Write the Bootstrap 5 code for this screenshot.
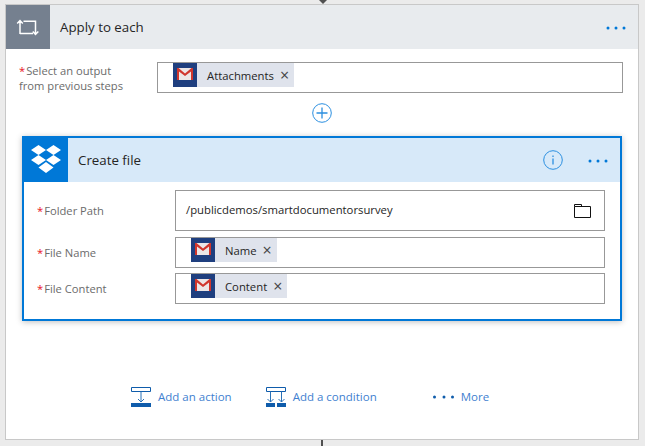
<!DOCTYPE html>
<html lang="en">
<head>
  <meta charset="UTF-8">
  <title>Apply to each</title>
  <link href="https://cdn.jsdelivr.net/npm/bootstrap@5.3.3/dist/css/bootstrap.min.css" rel="stylesheet">
  <script src="https://cdn.jsdelivr.net/npm/bootstrap@5.3.3/dist/js/bootstrap.bundle.min.js"></script>
  <style>
    html, body { height: 446px; overflow: hidden; }
    body { background: #ebebeb; font-family: "Open Sans", "Noto Sans", sans-serif; font-size: 12px; color: #252525; }
    .tick-top { height: 4px; }
    .tick-top svg { display: block; }
    .flow-panel { margin-left: 5px; width: 634px; height: 436px; background: #fff; border: 1px solid #c8c8c8; }
    .tick-bottom { width: 2px; height: 6px; background: #505050; margin-left: 321px; }
    .step-head { height: 44px; }
    .step-head.grey { background: #e8ebee; }
    .step-head.blue { background: #d7e9f9; }
    .step-icon { width: 44px; height: 44px; }
    .step-icon.grey { background: #75808f; }
    .step-icon.blue { background: #0078d7; }
    .step-title { font-size: 13.3px; padding-left: 10px; padding-top: 1px; }
    .dots { width: 20px; height: 4px; margin-right: 12px; margin-top: 2px; }
    .info-mark { margin-right: 25px; }
    .field-label { color: #6b6b6b; font-size: 11.2px; line-height: 15px; }
    .req { color: #e81123; margin-right: 1px; }
    .field-box { border: 1px solid #989898; background: #fff; }
    .token { height: 24px; background: #dfe3ec; font-size: 11.3px; }
    .token-mail { width: 24px; height: 24px; background: #1f3f7f; }
    .token-text { margin-left: 10px; padding-top: 2px; }
    .token-x { color: #444; font-size: 16px; line-height: 1; margin: 0 5px 0 6px; }
    .loop-field { margin: 13px 15px 0 13px; }
    .loop-field .field-label { width: 138px; padding-top: 1px; }
    .loop-field .field-box { height: 31px; padding-left: 15px; flex: 1; }
    .plus-row { height: 43px; padding-bottom: 3px; }
    .inner-step { margin: 0 16px; height: 185px; border: 2px solid #0078d7; box-shadow: 0 1px 6px rgba(0,0,0,.25); }
    .inner-rows { padding: 8px 15px 0 13px; }
    .inner-rows .field-label { width: 138px; margin-bottom: 6px; }
    .inner-rows .field-box { flex: 1; height: 31px; padding-left: 15px; margin-bottom: 5px; }
    .inner-rows .field-box.tall { height: 41px; padding-left: 10px; padding-right: 13px; margin-bottom: 6px; font-size: 11.3px; }
    .add-bar { padding-top: 66px; padding-left: 125px; }
    .add-item { color: #3f7fd0; font-size: 11.5px; text-decoration: none; }
    .add-item svg { margin-right: 7px; }
    .add-cond { margin-left: 34px; }
    .add-more { margin-left: 56px; }
  </style>
</head>
<body>
  <div class="tick-top d-flex justify-content-center">
    <svg width="10" height="4" viewBox="0 0 10 4"><path d="M1 0h8L5 4z" fill="#505050"/></svg>
  </div>
  <div class="flow-panel">
    <div class="step-head grey d-flex align-items-center">
      <div class="step-icon grey">
        <svg width="44" height="44" viewBox="0 0 44 44" fill="none" stroke="#fff" stroke-width="1.5">
          <path d="M14 29V16M11.200 18.500L14 15.500l2.800 3M14 28.500h13M17.500 16.250h12V29M26.800 26.500l2.700 3 2.800-3"/>
        </svg>
      </div>
      <div class="step-title flex-grow-1">Apply to each</div>
      <svg class="dots" viewBox="0 0 20 4" fill="#0078d7"><circle cx="2" cy="2" r="1.500"/><circle cx="10" cy="2" r="1.500"/><circle cx="18" cy="2" r="1.500"/></svg>
    </div>

    <div class="loop-field d-flex">
      <div class="field-label"><span class="req">*</span>Select an output<br>from previous steps</div>
      <div class="field-box d-flex">
        <div class="token d-flex align-items-center">
          <div class="token-mail">
            <svg width="24" height="24" viewBox="0 0 24 24"><path d="M4 5h16v12H4z" fill="#ece6e6"/><path d="M4 17V5h1.500L12 10.500 18.500 5H20v12h-2V8.500L12 13 6 8.500V17z" fill="#d0352c"/></svg>
          </div>
          <span class="token-text">Attachments</span>
          <span class="token-x">×</span>
        </div>
      </div>
    </div>

    <div class="plus-row d-flex align-items-center justify-content-center">
      <svg width="20" height="20" viewBox="0 0 20 20" fill="none" stroke="#2b8fe0"><circle cx="10" cy="10" r="9.300" stroke-width="1"/><path d="M10 4.500v11M4.500 10h11" stroke-width="1.300"/></svg>
    </div>

    <div class="inner-step">
      <div class="step-head blue d-flex align-items-center">
        <div class="step-icon blue d-flex align-items-center justify-content-center">
          <svg width="32" height="30" viewBox="0 0 32 30" fill="#fff">
            <path d="M8.500 0L16 5 8.500 10 1 5zM23.500 0L31 5l-7.500 5L16 5zM8.500 10L16 15l-7.500 5L1 15zM23.500 10L31 15l-7.500 5L16 15zM16 17l7.500 5.500L16 28l-7.500-5.500z"/>
          </svg>
        </div>
        <div class="step-title flex-grow-1">Create file</div>
        <svg class="info-mark" width="20" height="20" viewBox="0 0 20 20" fill="none" stroke="#2b8fe0"><circle cx="10" cy="10" r="9.300"/><path d="M10 8.500v6M10 5.500v1.500" stroke-width="1.300"/></svg>
        <svg class="dots" viewBox="0 0 20 4" fill="#0078d7"><circle cx="2" cy="2" r="1.500"/><circle cx="10" cy="2" r="1.500"/><circle cx="18" cy="2" r="1.500"/></svg>
      </div>
      <div class="inner-rows">
        <div class="d-flex align-items-center">
          <div class="field-label"><span class="req">*</span>Folder Path</div>
          <div class="field-box tall d-flex align-items-center justify-content-between">
            <span>/publicdemos/smartdocumentorsurvey</span>
            <svg width="17" height="14" viewBox="0 0 17 14" fill="none" stroke="#111"><path d="M.5 13.500V2.500h16v11zM.5 2.500V.5h7v2"/></svg>
          </div>
        </div>
        <div class="d-flex align-items-center">
          <div class="field-label"><span class="req">*</span>File Name</div>
          <div class="field-box d-flex">
            <div class="token d-flex align-items-center">
              <div class="token-mail">
                <svg width="24" height="24" viewBox="0 0 24 24"><path d="M4 5h16v12H4z" fill="#ece6e6"/><path d="M4 17V5h1.500L12 10.500 18.500 5H20v12h-2V8.500L12 13 6 8.500V17z" fill="#d0352c"/></svg>
              </div>
              <span class="token-text">Name</span>
              <span class="token-x">×</span>
            </div>
          </div>
        </div>
        <div class="d-flex align-items-center">
          <div class="field-label"><span class="req">*</span>File Content</div>
          <div class="field-box d-flex">
            <div class="token d-flex align-items-center">
              <div class="token-mail">
                <svg width="24" height="24" viewBox="0 0 24 24"><path d="M4 5h16v12H4z" fill="#ece6e6"/><path d="M4 17V5h1.500L12 10.500 18.500 5H20v12h-2V8.500L12 13 6 8.500V17z" fill="#d0352c"/></svg>
              </div>
              <span class="token-text">Content</span>
              <span class="token-x">×</span>
            </div>
          </div>
        </div>
      </div>
    </div>

    <div class="add-bar d-flex align-items-center">
      <a class="add-item d-flex align-items-center" href="#">
        <svg width="20" height="20" viewBox="0 0 20 20" fill="none" stroke="#0f5cab"><path d="M.5.500h19v4H.5z"/><path d="M10 4.500v10.500M7 12l3 3 3-3" stroke="#2a72b8"/><path d="M0 16h20v4H0z" fill="#0f5cab" stroke="none"/></svg>
        Add an action
      </a>
      <a class="add-item add-cond d-flex align-items-center" href="#">
        <svg width="20" height="20" viewBox="0 0 20 20" fill="none" stroke="#0f5cab"><path d="M.5.500h19v4H.5z"/><path d="M4.500 4.500v10.500M1.500 12l3 3 3-3M15.500 4.500v10.500M12.500 12l3 3 3-3" stroke="#2a72b8"/><path d="M0 16h9v4H0zM11 16h9v4h-9z" fill="#0f5cab" stroke="none"/></svg>
        Add a condition
      </a>
      <a class="add-item add-more d-flex align-items-center" href="#">
        <svg width="21" height="4" viewBox="0 0 21 4" fill="#0f5cab"><circle cx="1.500" cy="2" r="1.500"/><circle cx="11" cy="2" r="1.500"/><circle cx="19.500" cy="2" r="1.500"/></svg>
        More
      </a>
    </div>
  </div>
  <div class="tick-bottom"></div>
</body>
</html>
